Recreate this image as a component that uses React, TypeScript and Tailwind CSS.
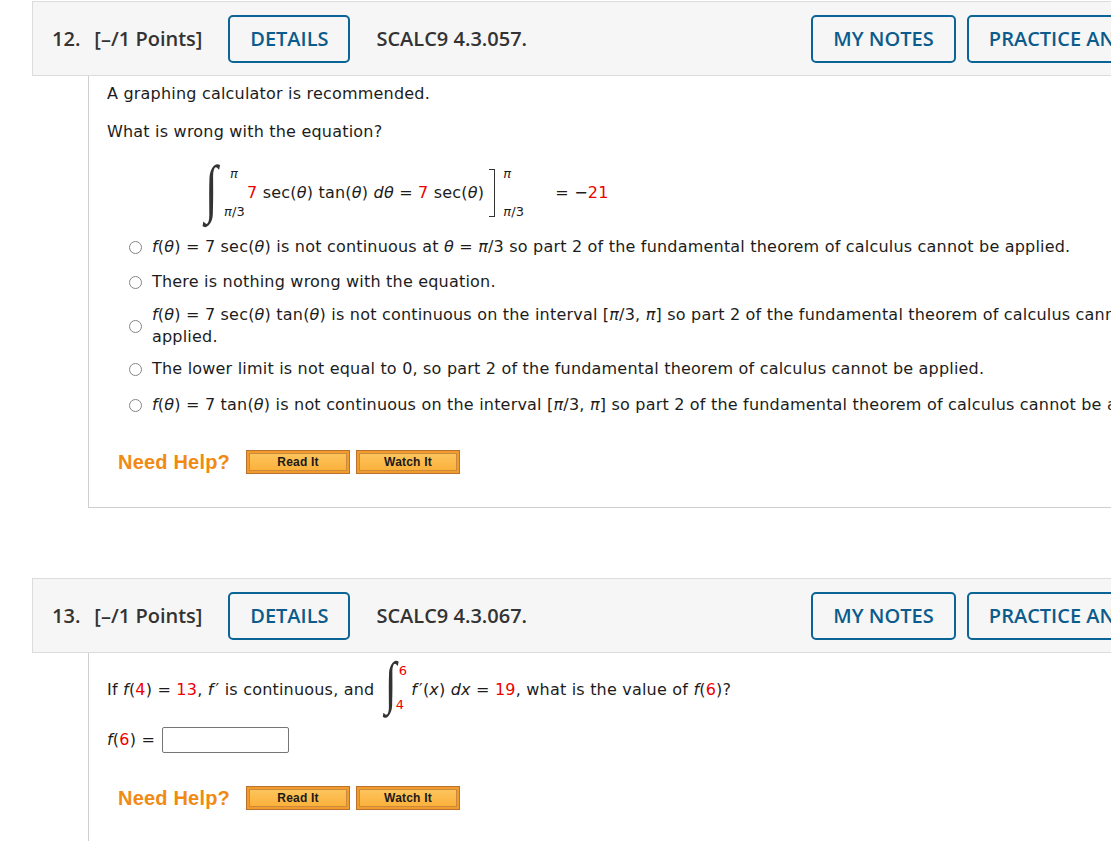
import React from 'react';

const body = { fontFamily: '"DejaVu Sans", Verdana, sans-serif', letterSpacing: '0.2px' };
const head = { fontFamily: '"Open Sans", sans-serif' };
const arial = { fontFamily: '"Liberation Sans", Arial, sans-serif' };

function R({ children }: { children: React.ReactNode }) {
    return <span className="text-[#ee0000]">{children}</span>;
}

function I({ children }: { children: React.ReactNode }) {
    return <span className="italic">{children}</span>;
}

// italic f followed by a prime mark
function FPrime() {
    return <span><span className="italic">f</span><span className="pl-[2px]">′</span></span>;
}

function OutlineBtn({ label, w }: { label: string; w: string }) {
    return (
        <div className={`${w} h-[48px] shrink-0 rounded-[5px] border-2 border-[#0a6496] flex items-center justify-center text-[20px] font-semibold text-[#0b5c8c] whitespace-nowrap overflow-hidden`}>
            {label}
        </div>
    );
}

function Header({ num, code }: { num: string; code: string }) {
    return (
        <div className="h-[75px] border border-[#dcdcdc] bg-[#f6f6f6] flex items-center pl-[19px] pr-[20px]" style={head}>
            <span className="text-[20px] font-semibold text-[#333] whitespace-nowrap">
                {num}.<span className="ml-[14px]">[–/1 Points]</span>
            </span>
            <div className="ml-[26px]"><OutlineBtn label="DETAILS" w="w-[122px]" /></div>
            <span className="ml-[26px] text-[20px] font-semibold text-[#333] whitespace-nowrap">{code}</span>
            <div className="ml-auto flex gap-[11px]">
                <OutlineBtn label="MY NOTES" w="w-[145px]" />
                <OutlineBtn label="PRACTICE ANOTHER" w="w-[236px]" />
            </div>
        </div>
    );
}

function HelpBtn({ label }: { label: string }) {
    return (
        <div className="w-[104px] h-[24px] border border-[#b8732e] bg-[#f39a2c] p-[2px]">
            <div className="h-full border border-[#c98a3e] bg-gradient-to-b from-[#fdc45a] to-[#fbb13c] flex items-center justify-center text-[12px] font-bold text-[#1a1a1a]" style={arial}>
                {label}
            </div>
        </div>
    );
}

function NeedHelp() {
    return (
        <div className="flex items-center pl-[11px]">
            <span className="text-[20px] font-bold text-[#f08a12] w-[128px]" style={arial}>Need Help?</span>
            <div className="flex gap-[6px]">
                <HelpBtn label="Read It" />
                <HelpBtn label="Watch It" />
            </div>
        </div>
    );
}

function Radio() {
    return <span className="w-[13px] h-[13px] rounded-full border border-[#858585] bg-white shrink-0" />;
}

function Option({ children, className = '' }: { children: React.ReactNode; className?: string }) {
    return (
        <div className={`flex items-center gap-[10px] pl-[22px] leading-[22px] whitespace-nowrap ${className}`}>
            <Radio />
            <div>{children}</div>
        </div>
    );
}

function Integral({ upper, lower, small = false }: { upper: React.ReactNode; lower: React.ReactNode; small?: boolean }) {
    return (
        <span className={`inline-flex items-stretch ${small ? 'h-[48px]' : 'h-[52px]'}`}>
            <span className={`${small ? 'w-[8px]' : 'w-[16px]'} relative overflow-visible`}>
                <span
                    className={`absolute italic text-[#333] origin-left ${small ? 'left-[-3px] top-[-10px] text-[58px] leading-[58px]' : 'left-[-3px] top-[-10px] text-[64px] leading-[64px]'}`}
                    style={{ fontFamily: '"Liberation Serif", serif', transform: 'scaleX(0.72)' }}
                >∫</span>
            </span>
            <span className="flex flex-col justify-between text-[13px] leading-[14px]">
                <span className={small ? 'pl-[3px]' : 'pl-[6px]'}>{upper}</span>
                <span>{lower}</span>
            </span>
        </span>
    );
}

export default function App() {
    return (
        <div className="w-full min-h-[841px] overflow-hidden bg-white">
            <div className="w-[1192px] ml-[32px] pt-[1px] text-[#1c1c1c]">
                {/* Question 12 */}
                <Header num="12" code="SCALC9 4.3.057." />
                <div className="ml-[56px] border-l border-b border-[#cfcfcf] pl-[18px] pt-[8px] pb-[33px] text-[16px] leading-[20px]" style={body}>
                    <p>A graphing calculator is recommended.</p>
                    <p className="mt-[18px]">What is wrong with the equation?</p>
                    <div className="mt-[23px] ml-[101px] flex items-center h-[55px] whitespace-nowrap">
                        <Integral upper={<I>π</I>} lower={<span><I>π</I>/3</span>} />
                        <span className="ml-[2px]"><R>7</R> sec(<I>θ</I>) tan(<I>θ</I>) <I>dθ</I> = <R>7</R> sec(<I>θ</I>)</span>
                        <span className="ml-[5px] w-[6px] h-[48px] border-r border-t border-b border-[#333]" />
                        <span className="flex flex-col justify-between h-[52px] text-[13px] leading-[14px] ml-[8px]">
                            <I>π</I>
                            <span><I>π</I>/3</span>
                        </span>
                        <span className="ml-[31px]">= −<R>21</R></span>
                    </div>
                    <div className="mt-[16px]">
                        <Option><I>f</I>(<I>θ</I>) = 7 sec(<I>θ</I>) is not continuous at <I>θ</I> = <I>π</I>/3 so part 2 of the fundamental theorem of calculus cannot be applied.</Option>
                        <Option className="mt-[13px]">There is nothing wrong with the equation.</Option>
                        <Option className="mt-[11px]">
                            <I>f</I>(<I>θ</I>) = 7 sec(<I>θ</I>) tan(<I>θ</I>) is not continuous on the interval [<I>π</I>/3, <I>π</I>] so part 2 of the fundamental theorem of calculus cannot be
                            <br />applied.
                        </Option>
                        <Option className="mt-[10px]">The lower limit is not equal to 0, so part 2 of the fundamental theorem of calculus cannot be applied.</Option>
                        <Option className="mt-[14px]"><I>f</I>(<I>θ</I>) = 7 tan(<I>θ</I>) is not continuous on the interval [<I>π</I>/3, <I>π</I>] so part 2 of the fundamental theorem of calculus cannot be applied.</Option>
                    </div>
                    <div className="mt-[34px]">
                        <NeedHelp />
                    </div>
                </div>

                {/* Question 13 */}
                <div className="mt-[70px]">
                    <Header num="13" code="SCALC9 4.3.067." />
                </div>
                <div className="ml-[56px] border-l border-[#cfcfcf] pl-[18px] pt-[12px] pb-[40px] text-[16px] leading-[20px]" style={body}>
                    <div className="flex items-center h-[50px] whitespace-nowrap">
                        <span>If <I>f</I>(<R>4</R>) = <R>13</R>, <FPrime /> is continuous, and&nbsp;</span>
                        <span className="ml-[8px]"><Integral upper={<R>6</R>} lower={<R>4</R>} small /></span>
                        <span className="ml-[4px]"><FPrime />(<I>x</I>) <I>dx</I> = <R>19</R>, what is the value of <I>f</I>(<R>6</R>)?</span>
                    </div>
                    <div className="mt-[12px] flex items-center">
                        <span><I>f</I>(<R>6</R>) =&nbsp;</span>
                        <span className="ml-[2px] w-[127px] h-[26px] border border-[#767676] rounded-[2px] bg-white" />
                    </div>
                    <div className="mt-[33px]">
                        <NeedHelp />
                    </div>
                </div>
            </div>
        </div>
    );
}
